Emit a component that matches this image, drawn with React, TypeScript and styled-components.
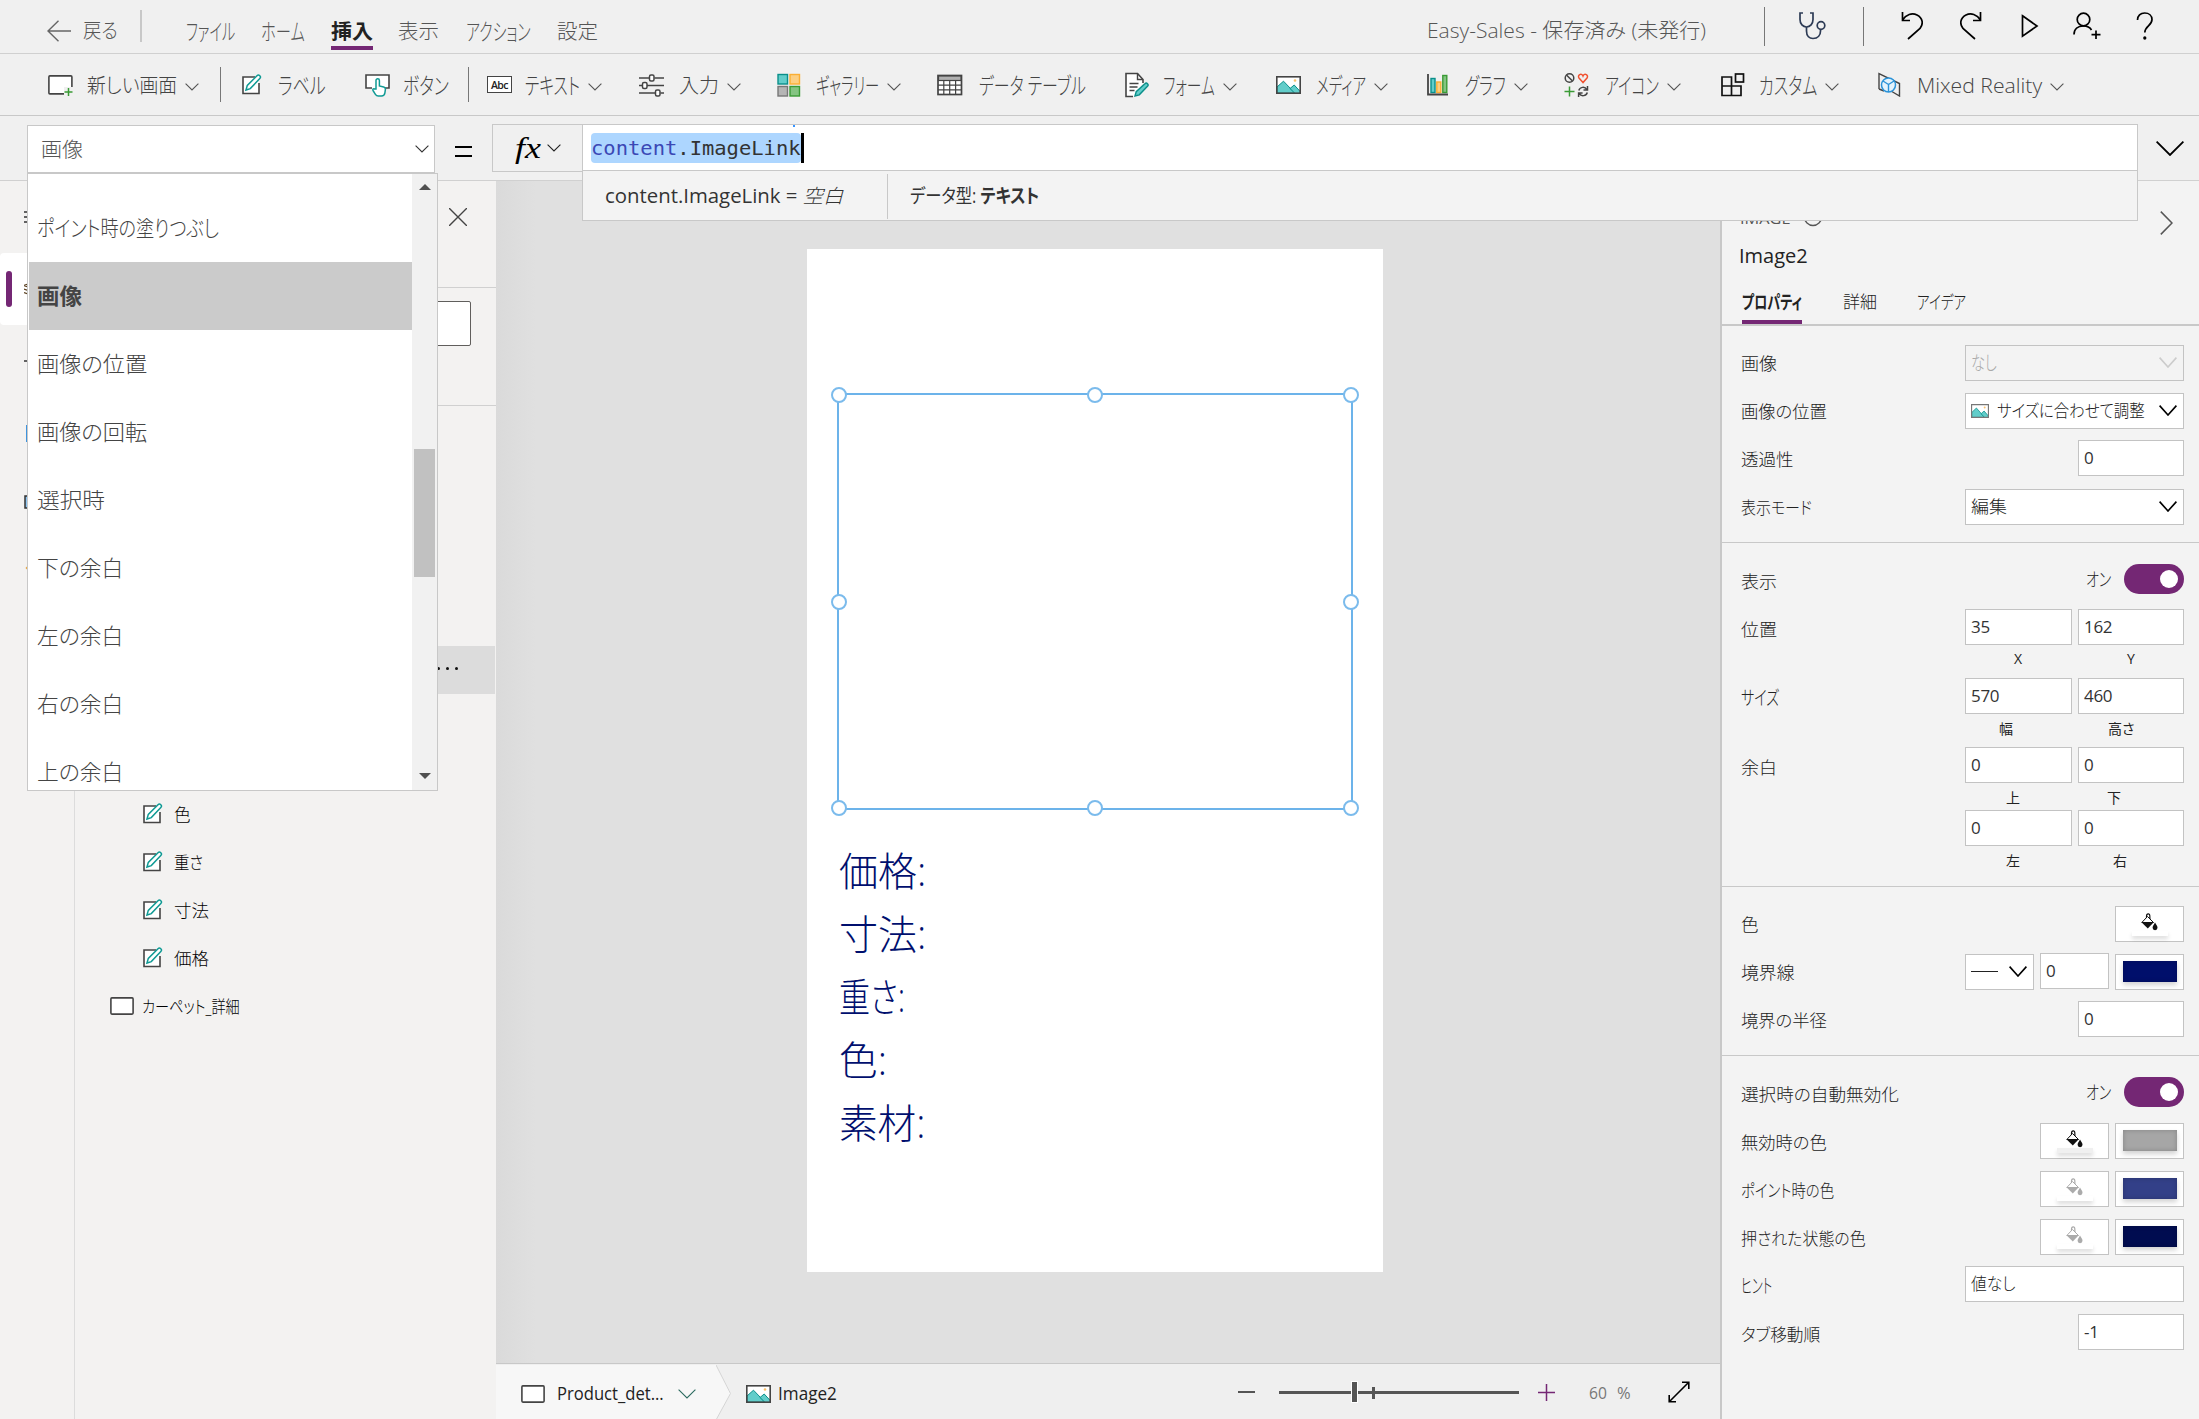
import React, { useLayoutEffect, useRef } from "react";
import styled, { createGlobalStyle } from "styled-components";

const GlobalStyle = createGlobalStyle`
  * { box-sizing: border-box; }
  body {
    margin: 0;
    background: #f0f0f0;
    font-family: "Open Sans", "Noto Sans CJK JP", sans-serif;
    font-feature-settings: "palt";
    color: #333;
    overflow: hidden;
  }
  svg { display: block; flex: none; }
`;

/* ---------- text squeezed to a given width (UI kana are narrow) ---------- */

const FitBox = styled.span<{ $w: number }>`
  display: flex;
  align-items: center;
  flex: none;
  width: ${(props) => props.$w}px;
  height: 1.4em;
  line-height: 1.4;
  white-space: nowrap;
`;

const FitText = styled.span<{ $kana: boolean }>`
  flex: none;
  font-size: ${(props) => (props.$kana ? "1.12em" : "1em")};
  transform-origin: 0 50%;
`;

function Fit({ w, children }: { w: number; children: React.ReactNode }) {
  const ref = useRef<HTMLSpanElement>(null);
  const kana = typeof children === "string" && /^[\u3040-\u30ff ]+$/.test(children);
  useLayoutEffect(() => {
    const el = ref.current;
    if (el) el.style.transform = `scaleX(${w / el.offsetWidth})`;
  }, [w]);
  return (
    <FitBox $w={w}>
      <FitText ref={ref} $kana={kana}>{children}</FitText>
    </FitBox>
  );
}

/* ---------- icons ---------- */

const Chevron = ({ w = 14, h = 8, color = "#555", sw = 1.1 }: { w?: number; h?: number; color?: string; sw?: number }) => (
  <svg width={w} height={h} viewBox={`0 0 ${w} ${h}`} fill="none" stroke={color} strokeWidth={sw}>
    <path d={`M0.6 0.6 L${w / 2} ${h - 1} L${w - 0.6} 0.6`} />
  </svg>
);

const BackIcon = () => (
  <svg width="24" height="22" fill="none" stroke="#666" strokeWidth="1.4">
    <path d="M24 11H1M11.5 0.8L1 11l10.5 10.2" />
  </svg>
);

const ScreenIcon = () => (
  <svg width="26" height="24" fill="none">
    <rect x="0.9" y="2.9" width="23" height="18" rx="1" fill="#fff" stroke="#444" strokeWidth="1.6" />
    <rect x="16" y="14" width="10" height="10" fill="#f0f0f0" />
    <path d="M20.500 15v8M16.500 19h8" stroke="#3a9b35" strokeWidth="1.5" />
  </svg>
);

const LabelIcon = () => (
  <svg width="22" height="22" fill="none">
    <path d="M14 3H2v16.500h16V9" fill="#fff" stroke="#444" strokeWidth="1.6" />
    <path d="M5 16l1.300-4.600L16 1.700a1.900 1.900 0 0 1 2.800 2.800L9.300 14.600z" fill="#fff" stroke="#0f9a94" strokeWidth="1.500" />
  </svg>
);

const ButtonIcon = () => (
  <svg width="26" height="24" fill="none">
    <path d="M7 15H1V2h23v13h-4" fill="#fff" stroke="#444" strokeWidth="1.6" />
    <path d="M11 16V7.500a1.700 1.700 0 0 1 3.400 0V13l4.300 1c1.300.300 1.800 1 1.700 2.300l-.5 3.500c-.3 1.700-1.600 3.200-3.400 3.200h-3.200c-1.300 0-2.200-.6-2.900-1.700L8 17.500c-.6-1 .4-2.200 1.500-1.500z" fill="#fff" stroke="#0f9a94" strokeWidth="1.500" />
  </svg>
);

const AbcBox = styled.span`
  display: flex;
  align-items: center;
  justify-content: center;
  width: 25px;
  height: 17px;
  border: 1.6px solid #444;
  background: #fff;
  font-size: 10.500px;
  font-weight: 600;
  letter-spacing: -0.5px;
  color: #222;
`;

const InputIcon = () => (
  <svg width="26" height="24" fill="none" stroke="#444" strokeWidth="1.5">
    <path d="M0 5h10M15.500 5H25M0 12.500h3M8 12.500h17M0 20h16M21.500 20H25" />
    <rect x="10.500" y="2" width="4.500" height="6" rx="1.500" fill="#fff" />
    <rect x="3.500" y="9.500" width="4.500" height="6" rx="1.500" fill="#fff" />
    <rect x="16.500" y="17" width="4.500" height="6" rx="1.500" fill="#fff" />
  </svg>
);

const GalleryIcon = () => (
  <svg width="24" height="24" strokeWidth="1.400">
    <rect x="1" y="1.500" width="9.500" height="9.500" fill="#62cdca" stroke="#0a8f8a" />
    <rect x="13" y="1.500" width="9.500" height="9.500" fill="#fccf83" stroke="#fbae33" />
    <rect x="1" y="13.500" width="9.500" height="9.500" fill="#b5b5b5" stroke="#777" />
    <rect x="13" y="13.500" width="9.500" height="9.500" fill="#84c482" stroke="#3a9b35" />
  </svg>
);

const TableIcon = () => (
  <svg width="26" height="22" fill="none" stroke="#444" strokeWidth="1.200">
    <rect x="1" y="1.500" width="23.500" height="19" fill="#fff" strokeWidth="1.700" />
    <rect x="1.500" y="2" width="22.500" height="4.500" fill="#b0b0b0" />
    <path d="M1 11.200h23.500M1 15.800h23.500M6.800 6.500V20M12.700 6.500V20M18.600 6.500V20" />
  </svg>
);

const FormIcon = () => (
  <svg width="24" height="26" fill="none">
    <path d="M8 24.500H1V1.500h11.500l5.500 6V11" fill="#fff" stroke="#444" strokeWidth="1.600" />
    <path d="M12.500 1.500v6H18M4.500 11.500h9M4.500 15h8M4.500 18.500h5" stroke="#444" strokeWidth="1.400" />
    <path d="M10 24l1.200-4.300 8.700-8a1.800 1.800 0 0 1 2.600 2.600l-8.200 8.500z" fill="#62cdca" stroke="#0a8f8a" strokeWidth="1.400" />
  </svg>
);

const PictureIcon = ({ w = 25, h = 18, soft = false }: { w?: number; h?: number; soft?: boolean }) => (
  <svg width={w} height={h} viewBox="0 0 25 18" preserveAspectRatio="none" fill="none">
    <rect x="0.800" y="0.800" width="23.400" height="16.400" fill="#fff" />
    <path d="M1 11L7.500 5.200 19 17.200H1z" fill="#62cdca" stroke="#0a8f8a" strokeWidth="1" />
    <path d="M14 12.500l4.200-3.500 6 6.500v2H19z" fill="#62cdca" stroke="#0a8f8a" strokeWidth="1" />
    <circle cx="19" cy="4.500" r="1.300" fill="#fbc06a" />
    <rect x="0.800" y="0.800" width="23.400" height="16.400" stroke={soft ? "#777" : "#444"} strokeWidth="1.600" />
  </svg>
);

const ChartIcon = () => (
  <svg width="23" height="22" strokeWidth="1.400">
    <rect x="4" y="4.500" width="4" height="14" fill="#62cdca" stroke="#0a8f8a" />
    <rect x="9.800" y="8" width="4" height="10.500" fill="#fccf83" stroke="#fbae33" />
    <rect x="15.800" y="1.500" width="4" height="17" fill="#84c482" stroke="#3a9b35" />
    <path d="M1 0v20.500h20" fill="none" stroke="#444" strokeWidth="1.800" />
  </svg>
);

const IconsIcon = () => (
  <svg width="26" height="25" fill="none" strokeWidth="1.500">
    <circle cx="5.500" cy="6" r="4.300" stroke="#444" />
    <path d="M2.500 3l6 6" stroke="#444" />
    <path d="M19 10.500L15 6C13 3 17.500.500 19 4c1.500-3.500 6-1 4 2z" stroke="#f1502f" />
    <path d="M5.500 14.500v10M.500 19.500h10" stroke="#3a9b35" />
    <path d="M14.800 18.500c1-3.500 6-4.500 8-1M23.500 14v4h-4M23.300 20.500c-1 3.500-6 4.500-8 1M14.600 25v-4h4" stroke="#444" />
  </svg>
);

const CustomIcon = () => (
  <svg width="24" height="24" fill="none" stroke="#111" strokeWidth="1.700">
    <path d="M1 4h9.500v18.500H1zM1 13h19v9.500H1M20 13v9.500" />
    <rect x="14.500" y="1" width="8" height="8" />
  </svg>
);

const RealityIcon = () => (
  <svg width="23" height="25" fill="none">
    <path d="M1 17V1.500l20.500 10V24L13 19M1 17l5 2" stroke="#444" strokeWidth="1.400" />
    <circle cx="10.500" cy="13" r="7" fill="#e4f3fc" stroke="#2b93d9" strokeWidth="1.500" />
    <path d="M5 9l5.500 3.500L16 9M10.500 12.500V20" stroke="#2b93d9" strokeWidth="1.400" />
  </svg>
);

const ScopeIcon = () => (
  <svg width="28" height="28" fill="none" stroke="#2d3b55" strokeWidth="1.700">
    <path d="M4 1H1v6.500c0 4.500 3 7.500 6.500 7.500s6.500-3 6.500-7.500V1h-3" />
    <path d="M7.500 15v4c0 5 3 7.500 6.500 7.500 5 0 7.500-3.500 7.500-7.500v-1.500" />
    <circle cx="22" cy="13.500" r="3.800" />
  </svg>
);

const UndoIcon = () => (
  <svg width="22" height="28" fill="none" stroke="#000" strokeWidth="1.700">
    <path d="M1.500 0v8.500H9M1.500 8C5 2.500 11 .5 16 3c6 3 6.500 9 3 13.500L7 27" />
  </svg>
);

const RedoIcon = () => (
  <svg width="22" height="28" fill="none" stroke="#000" strokeWidth="1.700">
    <path d="M20.500 0v8.500H13M20.500 8C17 2.500 11 .5 6 3 0 6-.5 12 3 16.500L15 27" />
  </svg>
);

const PlayIcon = () => (
  <svg width="18" height="24" fill="none" stroke="#000" strokeWidth="1.700">
    <path d="M1.500 1.800L16 12 1.500 22.200z" />
  </svg>
);

const PersonIcon = () => (
  <svg width="29" height="28" fill="none" stroke="#000" strokeWidth="1.700">
    <circle cx="10.500" cy="7.500" r="6.300" />
    <path d="M1 22.500c0-5.500 4-8.700 9.500-8.700 4 0 6.500 1.600 8 4.200M23 18.500V27M18.500 22.700h9" />
  </svg>
);

const HelpIcon = () => (
  <svg width="18" height="28" fill="none" stroke="#000" strokeWidth="1.700">
    <path d="M1.500 8C1.500 3.500 4.500 1 8.700 1s7.300 2.600 7.300 6.500c0 6-7.200 6.800-7.200 13" />
    <circle cx="8.800" cy="26" r="0.800" fill="#000" />
  </svg>
);

const BucketIcon = ({ dim }: { dim?: boolean }) => (
  <svg width="17" height="18" viewBox="0 0 17 18" opacity={dim ? 0.35 : 1}>
    <path d="M5.500 6V3.500C5.500 0 9 .2 8.800 3L9 8" fill="none" stroke="#111" strokeWidth="1.200" />
    <path d="M6.500 3.500L.8 9.500h11.700z" fill="#fff" stroke="#111" strokeWidth="1" />
    <path d="M.5 9.200h12.200L6.800 15.500z" fill="#111" />
    <path d="M14 9.500c1.500 2.500 2.500 3.700 2.500 5.200a2.400 2.400 0 0 1-4.900 0c0-1.500 1-2.700 2.400-5.200z" fill="#111" />
  </svg>
);

const PhoneIcon = () => (
  <svg width="24" height="18">
    <rect x="0.900" y="0.900" width="22.200" height="16.200" rx="1" fill="#fff" stroke="#444" strokeWidth="1.600" />
  </svg>
);

const ExpandIcon = () => (
  <svg width="22" height="22" fill="none" stroke="#000" strokeWidth="1.600">
    <path d="M1.500 20.500l19-19M14 1.200h6.800V8M1.200 14v6.800H8" />
  </svg>
);

/* ---------- header ---------- */

const Page = styled.div`
  position: relative;
  width: 2199px;
  height: 1419px;
  display: flex;
  flex-direction: column;
  overflow: hidden;
`;

const TopBar = styled.header`
  display: flex;
  align-items: center;
  height: 54px;
  flex: none;
  padding: 8px 0 0 47px;
  border-bottom: 1px solid #d0d0d0;
  font-size: 20.5px;
  font-weight: 300;
  color: #555;
`;

const Gap = styled.div<{ $w: number }>`
  flex: none;
  width: ${(props) => props.$w}px;
`;

const Rule = styled.div<{ $h: number; $w?: number; $color?: string; $up?: number }>`
  flex: none;
  width: ${(props) => props.$w ?? 1}px;
  height: ${(props) => props.$h}px;
  margin-bottom: ${(props) => props.$up ?? 0}px;
  background: ${(props) => props.$color ?? "#777"};
`;

const Tab = styled.div<{ $active?: boolean; $next: number }>`
  display: flex;
  flex: none;
  align-items: flex-start;
  height: 45px;
  width: ${(props) => props.$next}px;
  font-weight: ${(props) => (props.$active ? 700 : 300)};
  color: ${(props) => (props.$active ? "#222" : "#555")};
`;

const TabText = styled.span<{ $active?: boolean }>`
  display: flex;
  align-items: center;
  height: 42px;
  padding-top: 8px;
  border-bottom: 4px solid ${(props) => (props.$active ? "#742774" : "transparent")};
`;

const tabs = [
  { text: "ファイル", w: 49, next: 75 },
  { text: "ホーム", w: 44, next: 70 },
  { text: "挿入", w: 42, next: 67, active: true },
  { text: "表示", w: 41, next: 68 },
  { text: "アクション", w: 65, next: 91 },
  { text: "設定", w: 41, next: 41 },
];

const TopActions = styled.div`
  display: flex;
  align-items: center;
  height: 46px;
  padding-bottom: 9px;
`;

const Ribbon = styled.div`
  display: flex;
  align-items: center;
  height: 62px;
  flex: none;
  padding-left: 48px;
  border-bottom: 1px solid #c8c8c8;
  font-size: 20.5px;
  font-weight: 300;
  color: #444;
`;

const RibbonItem = styled.div<{ $next: number }>`
  display: flex;
  flex: none;
  align-items: center;
  width: ${(props) => props.$next}px;
`;

const RibbonIcon = styled.span<{ $w: number }>`
  flex: none;
  width: ${(props) => props.$w}px;
`;

const RibbonText = styled.span`
  padding-top: 2px;
`;

const RibbonArrow = styled.span`
  padding: 5px 0 0 8px;
`;

const ribbon = [
  { icon: <ScreenIcon />, iw: 39, text: "新しい画面", w: 90, next: 172, menu: true },
  { rule: true, next: 21 },
  { icon: <LabelIcon />, iw: 37, text: "ラベル", w: 48, next: 124 },
  { icon: <ButtonIcon />, iw: 38, text: "ボタン", w: 46, next: 103 },
  { rule: true, next: 19 },
  { icon: <AbcBox>Abc</AbcBox>, iw: 38, text: "テキスト", w: 55, next: 152, menu: true },
  { icon: <InputIcon />, iw: 40, text: "入力", w: 40, next: 138, menu: true },
  { icon: <GalleryIcon />, iw: 39, text: "ギャラリー", w: 63, next: 160, menu: true },
  { icon: <TableIcon />, iw: 42, text: "データ テーブル", w: 107, next: 188 },
  { icon: <FormIcon />, iw: 38, text: "フォーム", w: 52, next: 151, menu: true },
  { icon: <PictureIcon />, iw: 40, text: "メディア", w: 50, next: 151, menu: true },
  { icon: <ChartIcon />, iw: 38, text: "グラフ", w: 41, next: 137, menu: true },
  { icon: <IconsIcon />, iw: 41, text: "アイコン", w: 54, next: 157, menu: true },
  { icon: <CustomIcon />, iw: 38, text: "カスタム", w: 58, next: 157, menu: true },
  { icon: <RealityIcon />, iw: 39, text: "Mixed Reality", w: 125, next: 200, menu: true },
];

/* ---------- formula bar ---------- */

const FormulaBar = styled.div`
  display: flex;
  flex: none;
  height: 65px;
  padding: 8px 0 0 27px;
  border-bottom: 1px solid #d0d0d0;
`;

const PropertySelect = styled.div`
  display: flex;
  align-items: center;
  justify-content: space-between;
  width: 408px;
  height: 48px;
  margin-top: 1px;
  padding: 0 5px 0 13px;
  background: #fff;
  border: 1px solid #c8c8c8;
  font-size: 20.5px;
  font-weight: 300;
  color: #555;
`;

const Equals = styled.div`
  width: 17px;
  height: 11px;
  margin: 22px 20px 0 20px;
  border-top: 2.500px solid #000;
  border-bottom: 2.500px solid #000;
`;

const FxBox = styled.div`
  display: flex;
  align-items: center;
  width: 90px;
  height: 48px;
  padding-left: 22px;
  gap: 6px;
  border: 1px solid #c8c8c8;
  border-right: none;
  color: #000;
  font: italic 29px "Liberation Serif", serif;
`;

const FormulaPane = styled.div`
  position: relative;
  z-index: 5;
  width: 1556px;
  height: 97px;
  flex: none;
  border: 1px solid #c8c8c8;
  background: #f3f3f3;
`;

const FormulaInput = styled.div`
  display: flex;
  align-items: center;
  height: 46px;
  padding-left: 8px;
  background: #fff;
  border-bottom: 1px solid #c8c8c8;
  font-family: "DejaVu Sans Mono", monospace;
  font-size: 20.300px;
  color: #333;
`;

const CompletionDot = styled.i`
  position: absolute;
  left: 210px;
  top: 0;
  width: 2px;
  height: 2px;
  background: #3794ff;
`;

const Selection = styled.span`
  display: flex;
  align-items: center;
  height: 30px;
  padding-top: 1px;
  background: #add6ff;
  border-radius: 4px;
`;

const Identifier = styled.span`
  color: #3b48b5;
`;

const Caret = styled.span`
  width: 3px;
  height: 30px;
  background: #000;
`;

const ResultRow = styled.div`
  display: flex;
  align-items: center;
  height: 49px;
  padding: 1px 0 0 22px;
  font-size: 19.500px;
  color: #333;

  em { font-weight: 300; }
`;

const ExpandFormula = styled.div`
  padding: 17px 0 0 18px;
`;

/* ---------- property dropdown ---------- */

const Dropdown = styled.div`
  position: absolute;
  z-index: 6;
  left: 27px;
  top: 173px;
  width: 411px;
  height: 618px;
  display: flex;
  border: 1px solid #c8c8c8;
  padding-left: 1px;
  background: #fff;
`;

const DropdownList = styled.div`
  flex: 1;
  padding-top: 20px;
  overflow: hidden;
`;

const DropdownItem = styled.div<{ $active?: boolean }>`
  display: flex;
  align-items: center;
  height: 68px;
  padding: 0 0 2px 8px;
  font-size: 22px;
  font-weight: ${(props) => (props.$active ? 700 : 300)};
  color: #444;
  background: ${(props) => (props.$active ? "#cbcbcb" : "transparent")};
`;

const ScrollTrack = styled.div`
  display: flex;
  flex-direction: column;
  align-items: center;
  width: 25px;
  padding: 10px 0 11px;
  background: #f1f1f1;
`;

const ScrollThumb = styled.div`
  width: 21px;
  height: 128px;
  margin: 259px 0 auto;
  background: #c1c1c1;
`;

const options = [
  { text: "ポイント時の塗りつぶし", w: 182 },
  { text: "画像", w: 45, active: true },
  { text: "画像の位置", w: 110 },
  { text: "画像の回転", w: 110 },
  { text: "選択時", w: 68 },
  { text: "下の余白", w: 86 },
  { text: "左の余白", w: 86 },
  { text: "右の余白", w: 86 },
  { text: "上の余白", w: 86 },
];

/* ---------- left side ---------- */

const Body = styled.div`
  display: flex;
  flex: 1;
  min-height: 0;
`;

const Rail = styled.nav`
  display: flex;
  flex-direction: column;
  width: 75px;
  border-right: 1px solid #dcdcdc;
  background: #f3f2f1;
`;

const RailItem = styled.div<{ $active?: boolean; $h?: number }>`
  display: flex;
  align-items: center;
  height: ${(props) => props.$h ?? 72}px;
  gap: 12px;
  padding-left: ${(props) => (props.$active ? 6 : 24)}px;
  border-radius: 4px;
  background: ${(props) => (props.$active ? "#fff" : "transparent")};
`;

const RailMark = styled.span`
  width: 6px;
  height: 36px;
  border-radius: 3px;
  background: #742774;
`;

const TreePanel = styled.aside`
  display: flex;
  flex-direction: column;
  width: 421px;
  background: #f3f2f1;
`;

const TreeHead = styled.div`
  display: flex;
  justify-content: flex-end;
  height: 107px;
  padding: 27px 29px 0 0;
  border-bottom: 1px solid #d0d0d0;
`;

const TreeSearch = styled.div`
  display: flex;
  height: 118px;
  padding: 13px 25px 0 16px;
  border-bottom: 1px solid #d0d0d0;
`;

const SearchBox = styled.div`
  flex: 1;
  height: 45px;
  border: 1px solid #605e5c;
  border-radius: 2px;
  background: #fff;
`;

const TreeSelected = styled.div`
  display: flex;
  align-items: center;
  justify-content: flex-end;
  gap: 6px;
  height: 48px;
  margin: 240px 1px 96px 0;
  padding: 0 37px 4px 0;
  background: #dcdcdc;
`;

const Dot = styled.i`
  width: 3px;
  height: 3px;
  border-radius: 50%;
  background: #111;
`;

const TreeRow = styled.div<{ $screen?: boolean }>`
  display: flex;
  align-items: center;
  height: 48px;
  padding-left: ${(props) => (props.$screen ? 35 : 67)}px;
  gap: ${(props) => (props.$screen ? 8 : 10)}px;
  font-size: 17.500px;
  font-weight: 300;
  color: #000;
`;

/* ---------- canvas ---------- */

const Workspace = styled.main`
  display: flex;
  flex-direction: column;
  width: 1224px;
`;

const Stage = styled.div`
  flex: 1;
  padding: 68px 0 0 311px;
  background: linear-gradient(to right, #dadada, #e0e0e0 40px);
`;

const Artboard = styled.div`
  position: relative;
  width: 576px;
  height: 1023px;
  padding: 591px 0 0 32px;
  background: #fff;
`;

const ArtText = styled.div`
  display: flex;
  align-items: center;
  height: 63px;
  font-size: 39.500px;
  font-weight: 300;
  color: #000f6e;
`;

const ImageFrame = styled.div`
  position: absolute;
  left: 30px;
  top: 144px;
  width: 516px;
  height: 417px;
  border: 2px solid #6cb3ea;
`;

const Handle = styled.i<{ $x: number; $y: number }>`
  position: absolute;
  left: calc(${(props) => props.$x}% - 8px);
  top: calc(${(props) => props.$y}% - 8px);
  width: 16px;
  height: 16px;
  border: 2px solid #7bbbec;
  border-radius: 50%;
  background: #fff;
`;

const handles = [[0, 0], [50, 0], [100, 0], [0, 50], [100, 50], [0, 100], [50, 100], [100, 100]];

const StatusBar = styled.footer`
  display: flex;
  align-items: center;
  height: 56px;
  padding-top: 1px;
  border-top: 1px solid #c8c8c8;
  background: #efefef;
  font-size: 18px;
  color: #222;
`;

const Crumb = styled.div`
  display: flex;
  align-items: center;
  width: 220px;
  height: 55px;
  padding: 4px 0 0 25px;
  background: #f7f7f7;
`;

const CrumbImage = styled.div`
  display: flex;
  align-items: center;
  gap: 7px;
  padding: 4px 0 0 15px;
`;

const ZoomTrack = styled.div`
  position: relative;
  width: 240px;
  height: 3px;
  margin: 0 19px 0 24px;
  background: #555;
`;

const ZoomThumb = styled.i`
  position: absolute;
  left: 73px;
  top: -9px;
  width: 5px;
  height: 20px;
  background: #555;
  box-shadow: 0 0 0 1px #fff;
`;

const ZoomTick = styled.i`
  position: absolute;
  left: 93px;
  top: -4px;
  width: 3px;
  height: 12px;
  background: #555;
`;

const ZoomValue = styled.div`
  display: flex;
  gap: 10px;
  margin: 2px 37px 0 34px;
  font-size: 16.500px;
  color: #777;
`;

/* ---------- properties ---------- */

const Props = styled.aside`
  flex: 1;
  border-left: 2px solid #c8c8c8;
  background: #f3f3f3;
  font-size: 17.500px;
  font-weight: 300;
  color: #222;
`;

const PropsHead = styled.div`
  display: flex;
  justify-content: space-between;
  height: 58px;
  padding: 23px 26px 0 18px;
  font-size: 15px;
  color: #555;
`;

const PropsKind = styled.div`
  display: flex;
  gap: 13px;
  padding-top: 4px;
  font-weight: 400;
`;

const PropsInfo = styled.span`
  margin-top: -3px;
`;

const PropsName = styled.div`
  height: 38px;
  padding: 3px 0 0 17px;
  font-size: 20px;
  font-weight: 400;
`;

const PropsTabs = styled.div`
  display: flex;
  height: 49px;
  padding-left: 20px;
  border-bottom: 2px solid #c8c8c8;
  font-size: 16.500px;
`;

const PropsTab = styled.div<{ $active?: boolean; $gap: number }>`
  height: 47px;
  padding-top: 13px;
  margin-right: ${(props) => props.$gap}px;
  font-weight: ${(props) => (props.$active ? 700 : 300)};
  border-bottom: 4px solid ${(props) => (props.$active ? "#742774" : "transparent")};
`;

const Section = styled.section<{ $top: number; $bottom: number }>`
  padding: ${(props) => props.$top}px 15px ${(props) => props.$bottom}px 19px;
  border-bottom: 1px solid #c8c8c8;

  &:last-child { border: none; }
`;

const PropRow = styled.div<{ $h?: number; $pad?: number }>`
  display: flex;
  justify-content: space-between;
  align-items: ${(props) => (props.$h ? "flex-start" : "center")};
  height: ${(props) => props.$h ?? 48}px;
  padding-top: ${(props) => props.$pad ?? 0}px;
`;

const PropLabel = styled.div<{ $drop?: number }>`
  display: flex;
  align-items: center;
  height: 36px;
  padding-top: ${(props) => props.$drop ?? 0}px;
`;

const Controls = styled.div<{ $lift?: number }>`
  display: flex;
  gap: 6px;
  align-items: center;
  margin-bottom: ${(props) => props.$lift ?? 0}px;
`;

const Field = styled.div<{ $w: number; $disabled?: boolean }>`
  display: flex;
  align-items: center;
  justify-content: space-between;
  width: ${(props) => props.$w}px;
  height: 36px;
  padding: 0 6px 1px 5px;
  border: 1px solid #c3c3c3;
  background: ${(props) => (props.$disabled ? "#f3f3f3" : "#fff")};
  color: ${(props) => (props.$disabled ? "#aaa" : "#222")};
`;

const NumberField = styled(Field)`
  font-size: 17px;
  font-weight: 400;
  letter-spacing: -0.3px;
  color: #333;
`;

const FieldIcon = styled.span`
  display: flex;
  align-items: center;
  gap: 8px;
`;

const Captioned = styled.div`
  display: flex;
  flex-direction: column;
`;

const Caption = styled.div<{ $x: number }>`
  display: flex;
  align-items: center;
  height: 27px;
  padding-left: ${(props) => props.$x}px;
  font-size: 14px;
  font-weight: 400;
`;

const ToggleText = styled.span`
  margin-right: 7px;
  font-size: 16.500px;
`;

const Toggle = styled.div`
  display: flex;
  justify-content: flex-end;
  width: 60px;
  height: 30px;
  padding: 6px;
  border-radius: 15px;
  background: #742774;

  i { width: 18px; height: 18px; border-radius: 50%; background: #fff; }
`;

const SwatchBox = styled.div`
  display: flex;
  align-items: center;
  justify-content: center;
  width: 69px;
  height: 36px;
  padding-bottom: 2px;
  border: 1px solid #c3c3c3;
  background: #fff;
`;

const Swatch = styled.div<{ $color: string }>`
  width: 54px;
  height: 21px;
  background: ${(props) => props.$color};
  box-shadow: 0 3px 5px rgba(0, 0, 0, 0.18), inset 0 0 5px rgba(0, 0, 0, 0.2);
`;

const BucketBox = styled(SwatchBox)`
  flex-direction: column;
  padding: 0;
`;

const BucketFill = styled.div<{ $color: string }>`
  width: 36px;
  height: 5px;
  background: ${(props) => props.$color};
  box-shadow: 0 3px 4px rgba(0, 0, 0, 0.14);
`;

const LineSample = styled.span`
  width: 27px;
  height: 1px;
  background: #222;
`;

const Pair = ({ a, b, ca, cb }: { a: string; b: string; ca: [string, number]; cb: [string, number] }) => (
  <Controls>
    <Captioned>
      <NumberField $w={107}>{a}</NumberField>
      <Caption $x={ca[1]}>{ca[0]}</Caption>
    </Captioned>
    <Captioned>
      <NumberField $w={106}>{b}</NumberField>
      <Caption $x={cb[1]}>{cb[0]}</Caption>
    </Captioned>
  </Controls>
);

const Bucket = ({ dim, fill = "#fff" }: { dim?: boolean; fill?: string }) => (
  <BucketBox>
    <BucketIcon dim={dim} />
    <BucketFill $color={fill} />
  </BucketBox>
);

const OnToggle = () => (
  <Controls>
    <ToggleText><Fit w={25}>オン</Fit></ToggleText>
    <Toggle><i /></Toggle>
  </Controls>
);

const colorRows = [
  { text: "無効時の色", w: 86, color: "#a6a6a6", fill: "#f0f0f0", dim: false },
  { text: "ポイント時の色", w: 93, color: "#334088", fill: "#fff", dim: true },
  { text: "押された状態の色", w: 125, color: "#000c50", fill: "#fff", dim: true },
];

const DropArrow = ({ color = "#000" }: { color?: string }) => <Chevron w={18} h={11} color={color} sw={1.600} />;

export default function App() {
  return (
    <Page>
      <GlobalStyle />
      <TopBar>
        <BackIcon />
        <Gap $w={12} />
        <Fit w={35}>戻る</Fit>
        <Gap $w={22} />
        <Rule $h={32} $w={2} $color="#c8c8c8" $up={10} />
        <Gap $w={44} />
        {tabs.map((tab) => (
          <Tab key={tab.text} $active={tab.active} $next={tab.next}>
            <TabText $active={tab.active}><Fit w={tab.w}>{tab.text}</Fit></TabText>
          </Tab>
        ))}
        <Gap $w={829} />
        <Fit w={279}>Easy-Sales - 保存済み (未発行)</Fit>
        <TopActions>
          <Gap $w={58} />
          <Rule $h={39} />
          <Gap $w={34} />
          <ScopeIcon />
          <Gap $w={36} />
          <Rule $h={39} />
          <Gap $w={37} />
          <UndoIcon />
          <Gap $w={37} />
          <RedoIcon />
          <Gap $w={39} />
          <PlayIcon />
          <Gap $w={34} />
          <PersonIcon />
          <Gap $w={34} />
          <HelpIcon />
        </TopActions>
      </TopBar>

      <Ribbon>
        {ribbon.map((item, i) => (
          <RibbonItem key={i} $next={item.next}>
            {item.rule ? (
              <Rule $h={35} />
            ) : (
              <>
                <RibbonIcon $w={item.iw ?? 0}>{item.icon}</RibbonIcon>
                <RibbonText><Fit w={item.w ?? 0}>{item.text}</Fit></RibbonText>
                {item.menu && <RibbonArrow><Chevron /></RibbonArrow>}
              </>
            )}
          </RibbonItem>
        ))}
      </Ribbon>

      <FormulaBar>
        <PropertySelect>
          <Fit w={42}>画像</Fit>
          <Chevron color="#333" />
        </PropertySelect>
        <Equals />
        <FxBox>
          <Fit w={26}>fx</Fit>
          <Chevron color="#222" />
        </FxBox>
        <FormulaPane>
          <FormulaInput>
            <Selection>
              <Fit w={210}><Identifier>content</Identifier>.ImageLink</Fit>
            </Selection>
            <Caret />
          </FormulaInput>
          <CompletionDot />
          <ResultRow>
            <Fit w={238}>content.ImageLink = <em>空白</em></Fit>
            <Gap $w={44} />
            <Rule $h={45} $color="#c8c8c8" />
            <Gap $w={22} />
            <Fit w={129}>データ型: <b>テキスト</b></Fit>
          </ResultRow>
        </FormulaPane>
        <ExpandFormula><Chevron w={28} h={15} color="#000" sw={1.800} /></ExpandFormula>
      </FormulaBar>

      <Dropdown>
        <DropdownList>
          {options.map((option) => (
            <DropdownItem key={option.text} $active={option.active}>
              <Fit w={option.w}>{option.text}</Fit>
            </DropdownItem>
          ))}
        </DropdownList>
        <ScrollTrack>
          <svg width="12" height="6"><path d="M0 6L6 0l6 6z" fill="#505050" /></svg>
          <ScrollThumb />
          <svg width="12" height="6"><path d="M0 0l6 6 6-6z" fill="#505050" /></svg>
        </ScrollTrack>
      </Dropdown>

      <Body>
        <Rail>
          <RailItem>
            <svg width="20" height="12" stroke="#333" strokeWidth="1.400"><path d="M0 1h20M0 6h20M0 11h20" /></svg>
          </RailItem>
          <RailItem $active>
            <RailMark />
            <svg width="20" height="14" fill="none" stroke="#5a4020" strokeWidth="1.300">
              <path d="M10 0L0 3.500 10 7l10-3.500zM0 7l10 3.500L20 7M0 10.500L10 14l10-3.500" />
            </svg>
          </RailItem>
          <RailItem>
            <svg width="20" height="20" stroke="#333" strokeWidth="1.600"><path d="M0 10h20M10 0v20" /></svg>
          </RailItem>
          <RailItem>
            <svg width="20" height="20"><rect x="2" y="2" width="15" height="17" fill="#3f94dd" /></svg>
          </RailItem>
          <RailItem $h={66}>
            <svg width="20" height="14" fill="#8cc4f0" stroke="#333" strokeWidth="1.500"><rect x="1" y="1" width="18" height="12" /></svg>
          </RailItem>
          <RailItem $h={66}>
            <svg width="20" height="20"><path d="M1.500 10l8-8 8 8-8 8z" fill="#e8a33a" /></svg>
          </RailItem>
        </Rail>
        <TreePanel>
          <TreeHead>
            <svg width="18" height="18" stroke="#444" strokeWidth="1.400"><path d="M0 0l18 18M18 0L0 18" /></svg>
          </TreeHead>
          <TreeSearch><SearchBox /></TreeSearch>
          <TreeSelected><Dot /><Dot /><Dot /></TreeSelected>
          <TreeRow><LabelIcon /><Fit w={17}>色</Fit></TreeRow>
          <TreeRow><LabelIcon /><Fit w={29}>重さ</Fit></TreeRow>
          <TreeRow><LabelIcon /><Fit w={35}>寸法</Fit></TreeRow>
          <TreeRow><LabelIcon /><Fit w={35}>価格</Fit></TreeRow>
          <TreeRow $screen><PhoneIcon /><Fit w={98}>カーペット_詳細</Fit></TreeRow>
        </TreePanel>

        <Workspace>
          <Stage>
            <Artboard>
              <ArtText><Fit w={87}>価格:</Fit></ArtText>
              <ArtText><Fit w={87}>寸法:</Fit></ArtText>
              <ArtText><Fit w={66}>重さ:</Fit></ArtText>
              <ArtText><Fit w={48}>色:</Fit></ArtText>
              <ArtText><Fit w={86}>素材:</Fit></ArtText>
              <ImageFrame>
                {handles.map(([x, y]) => <Handle key={`${x}-${y}`} $x={x} $y={y} />)}
              </ImageFrame>
            </Artboard>
          </Stage>
          <StatusBar>
            <Crumb>
              <PhoneIcon />
              <Gap $w={12} />
              <Fit w={107}>Product_det...</Fit>
              <Gap $w={14} />
              <Chevron w={18} h={10} color="#2c6b60" />
            </Crumb>
            <svg width="15" height="55">
              <path d="M0 0l15 28.500L0 55z" fill="#f7f7f7" />
              <path d="M0 0l14.500 28.500L0 55" fill="none" stroke="#d4d4d4" />
            </svg>
            <CrumbImage>
              <PictureIcon />
              <Fit w={59}>Image2</Fit>
            </CrumbImage>
            <Gap $w={401} />
            <svg width="17" height="2"><path d="M0 1h17" stroke="#000" strokeWidth="1.300" /></svg>
            <ZoomTrack><ZoomThumb /><ZoomTick /></ZoomTrack>
            <svg width="17" height="17" stroke="#742774" strokeWidth="1.500"><path d="M0 8.500h17M8.500 0v17" /></svg>
            <ZoomValue>
              <Fit w={18}>60</Fit>
              <Fit w={14}>%</Fit>
            </ZoomValue>
            <ExpandIcon />
          </StatusBar>
        </Workspace>

        <Props>
          <PropsHead>
            <PropsKind>
              <Fit w={50}>IMAGE</Fit>
              <PropsInfo>
                <svg width="20" height="22" fill="none" stroke="#555" strokeWidth="1.300"><circle cx="10" cy="12" r="8.500" /></svg>
              </PropsInfo>
            </PropsKind>
            <svg width="13" height="24" fill="none" stroke="#555" strokeWidth="1.500" transform="translate(0 7)">
              <path d="M0.800 0.600L12 12 0.800 23.400" />
            </svg>
          </PropsHead>
          <PropsName><Fit w={69}>Image2</Fit></PropsName>
          <PropsTabs>
            <PropsTab $active $gap={41}><Fit w={60}>プロパティ</Fit></PropsTab>
            <PropsTab $gap={40}><Fit w={34}>詳細</Fit></PropsTab>
            <PropsTab $gap={0}><Fit w={49}>アイデア</Fit></PropsTab>
          </PropsTabs>

          <Section $top={13} $bottom={11}>
            <PropRow>
              <PropLabel><Fit w={36}>画像</Fit></PropLabel>
              <Field $w={219} $disabled><Fit w={26}>なし</Fit><DropArrow color="#ccc" /></Field>
            </PropRow>
            <PropRow>
              <PropLabel><Fit w={86}>画像の位置</Fit></PropLabel>
              <Field $w={219}>
                <FieldIcon>
                  <PictureIcon w={18} h={14} soft />
                  <Fit w={148}>サイズに合わせて調整</Fit>
                </FieldIcon>
                <DropArrow />
              </Field>
            </PropRow>
            <PropRow>
              <PropLabel><Fit w={53}>透過性</Fit></PropLabel>
              <Controls $lift={2}><NumberField $w={106}>0</NumberField></Controls>
            </PropRow>
            <PropRow>
              <PropLabel><Fit w={71}>表示モード</Fit></PropLabel>
              <Field $w={219}><Fit w={36}>編集</Fit><DropArrow /></Field>
            </PropRow>
          </Section>

          <Section $top={12} $bottom={13}>
            <PropRow>
              <PropLabel $drop={4}><Fit w={36}>表示</Fit></PropLabel>
              <OnToggle />
            </PropRow>
            <PropRow $h={69} $pad={6}>
              <PropLabel $drop={4}><Fit w={36}>位置</Fit></PropLabel>
              <Pair a="35" b="162" ca={["X", 49]} cb={["Y", 49]} />
            </PropRow>
            <PropRow $h={69} $pad={6}>
              <PropLabel $drop={4}><Fit w={38}>サイズ</Fit></PropLabel>
              <Pair a="570" b="460" ca={["幅", 34]} cb={["高さ", 30]} />
            </PropRow>
            <PropRow $h={69} $pad={6}>
              <PropLabel $drop={4}><Fit w={36}>余白</Fit></PropLabel>
              <Pair a="0" b="0" ca={["上", 41]} cb={["下", 29]} />
            </PropRow>
            <PropRow $h={63}>
              <PropLabel />
              <Pair a="0" b="0" ca={["左", 41]} cb={["右", 35]} />
            </PropRow>
          </Section>

          <Section $top={13} $bottom={11}>
            <PropRow>
              <PropLabel><Fit w={18}>色</Fit></PropLabel>
              <Bucket />
            </PropRow>
            <PropRow>
              <PropLabel><Fit w={54}>境界線</Fit></PropLabel>
              <Controls>
                <Field $w={69}><LineSample /><DropArrow /></Field>
                <Controls $lift={2}><NumberField $w={69}>0</NumberField></Controls>
                <SwatchBox><Swatch $color="#000f6b" /></SwatchBox>
              </Controls>
            </PropRow>
            <PropRow>
              <PropLabel><Fit w={86}>境界の半径</Fit></PropLabel>
              <Controls $lift={2}><NumberField $w={106}>0</NumberField></Controls>
            </PropRow>
          </Section>

          <Section $top={12} $bottom={0}>
            <PropRow>
              <PropLabel $drop={4}><Fit w={158}>選択時の自動無効化</Fit></PropLabel>
              <OnToggle />
            </PropRow>
            {colorRows.map((row) => (
              <PropRow key={row.text}>
                <PropLabel $drop={4}><Fit w={row.w}>{row.text}</Fit></PropLabel>
                <Controls $lift={-2}>
                  <Bucket dim={row.dim} fill={row.fill} />
                  <SwatchBox><Swatch $color={row.color} /></SwatchBox>
                </Controls>
              </PropRow>
            ))}
            <PropRow>
              <PropLabel $drop={4}><Fit w={31}>ヒント</Fit></PropLabel>
              <Field $w={219}><Fit w={44}>値なし</Fit></Field>
            </PropRow>
            <PropRow>
              <PropLabel $drop={4}><Fit w={79}>タブ移動順</Fit></PropLabel>
              <NumberField $w={106}>-1</NumberField>
            </PropRow>
          </Section>
        </Props>
      </Body>
    </Page>
  );
}
